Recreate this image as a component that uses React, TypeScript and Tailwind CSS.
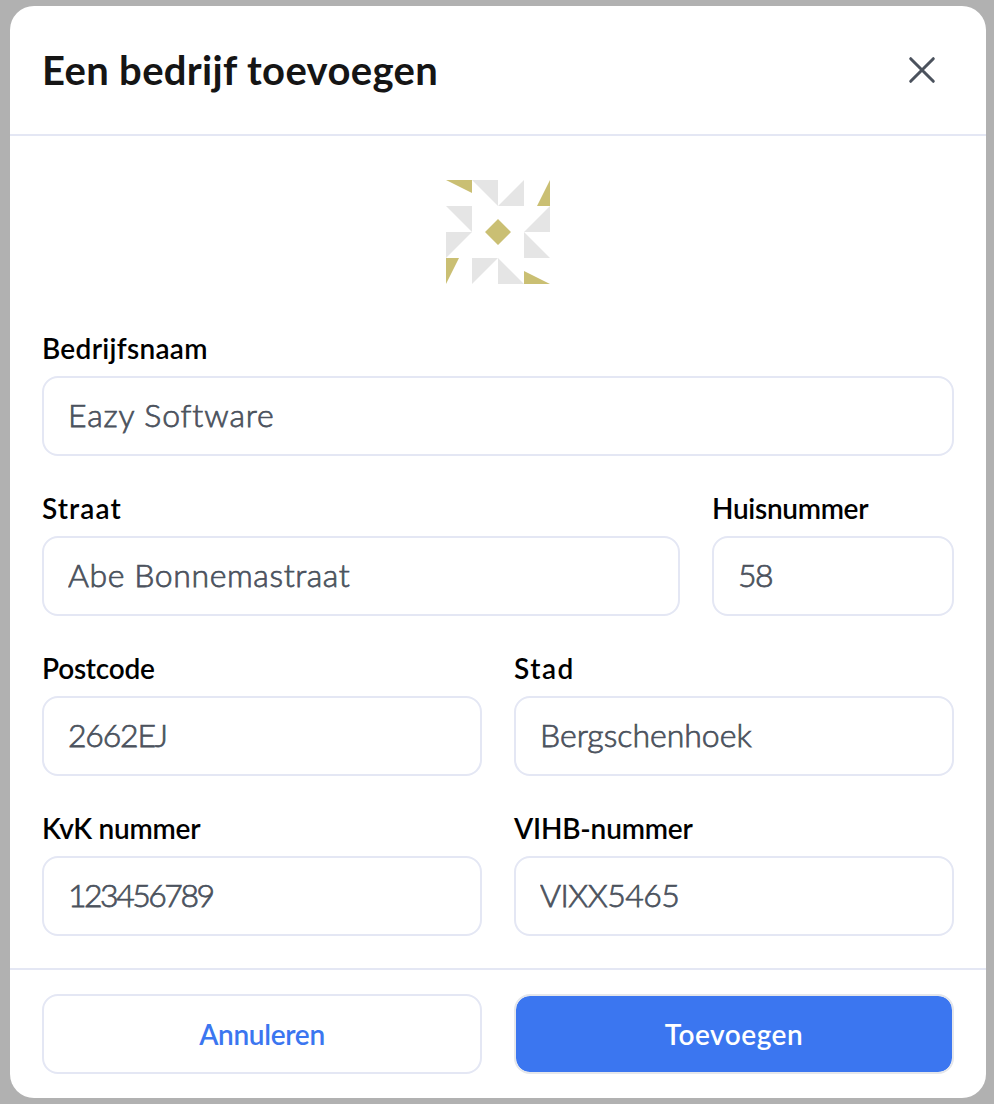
type FieldProps = { label: string; value: string; labelClass?: string; valueClass?: string };

function Field({ label, value, labelClass = "", valueClass = "" }: FieldProps) {
  return (
    <label className="flex min-w-0 flex-col gap-2">
      <span className="h-10 whitespace-nowrap text-[28px] leading-10 font-semibold text-black">
        <span className={labelClass}>{label}</span>
      </span>
      <input
        type="text"
        defaultValue={value}
        className={`h-20 w-full rounded-2xl border-2 border-[#e4e7f4] bg-white px-6 pb-[3px] text-[32px] font-light text-[#4b525d] outline-none [-webkit-text-stroke:0.75px_#4b525d] [font-variant-ligatures:none] ${valueClass}`}
      />
    </label>
  );
}

function CompanyMark() {
  return (
    <svg width="104" height="104" viewBox="0 0 104 104" aria-hidden="true">
      <path
        fill="#e5e5e5"
        d="M26 0H52V26ZM78 0V26H52ZM0 26H26V52ZM0 52H26L0 78ZM104 26V52H78ZM78 52L104 78H78ZM26 78H52L26 104ZM52 78L78 104H52Z"
      />
      <path
        fill="#cabf73"
        d="M0 0H26V13ZM104 0V26H91ZM0 78H13L0 104ZM78 91L104 104H78ZM52 39L65 52L52 65L39 52Z"
      />
    </svg>
  );
}

export default function App() {
  return (
    <div className="h-[1104px] w-full bg-[#b1b1b1] pt-1.5 pr-2 pb-1.5 pl-2.5 font-['Lato',sans-serif]">
      <div className="flex h-full flex-col overflow-hidden rounded-3xl bg-white">
        <header className="flex h-[130px] shrink-0 items-center justify-between border-b-2 border-[#e4e7f4] pr-12 pl-8">
          <h1 className="text-[40px] leading-none font-bold tracking-[0.33px] text-[#151515]">Een bedrijf toevoegen</h1>
          <button type="button" aria-label="Sluiten" className="flex size-8 items-center justify-center">
            <svg width="32" height="32" viewBox="0 0 32 32" fill="none" stroke="#4b525d" strokeWidth="3" strokeLinecap="round">
              <path d="M4.7 4.7L27.3 27.3M27.3 4.7L4.7 27.3" />
            </svg>
          </button>
        </header>

        <main className="flex flex-1 flex-col px-8 pt-11">
          <div className="flex justify-center pb-11">
            <CompanyMark />
          </div>
          <div className="flex flex-col gap-8">
            <Field label="Bedrijfsnaam" value="Eazy Software" labelClass="tracking-[0.3px]" valueClass="tracking-[0.88px]" />
            <div className="grid grid-cols-[638px_1fr] gap-8">
              <Field label="Straat" value="Abe Bonnemastraat" labelClass="tracking-[1.1px]" valueClass="tracking-[0.6px]" />
              <Field label="Huisnummer" value="58" labelClass="tracking-[-0.3px]" valueClass="tracking-[-1.5px]" />
            </div>
            <div className="grid grid-cols-2 gap-8">
              <Field label="Postcode" value="2662EJ" labelClass="tracking-[-0.25px]" valueClass="tracking-[-1.2px]" />
              <Field label="Stad" value="Bergschenhoek" labelClass="tracking-[1.5px]" />
            </div>
            <div className="grid grid-cols-2 gap-8">
              <Field label="KvK nummer" value="123456789" labelClass="tracking-[-0.25px]" valueClass="tracking-[-2.5px]" />
              <Field label="VIHB-nummer" value="VIXX5465" labelClass="tracking-[-0.18px]" valueClass="tracking-[-0.5px]" />
            </div>
          </div>
        </main>

        <footer className="grid h-[130px] shrink-0 grid-cols-2 gap-8 border-t-2 border-[#e4e7f4] px-8 py-6">
          <button type="button" className="h-20 rounded-2xl border-2 border-[#e4e7f4] bg-white text-[28px] font-semibold tracking-[-0.3px] text-[#3b76f0]">
            Annuleren
          </button>
          <button type="button" className="h-20 rounded-2xl border-2 border-[#e5e7eb] bg-[#3b76f0] bg-clip-padding text-[28px] font-semibold tracking-[0.5px] text-white">
            Toevoegen
          </button>
        </footer>
      </div>
    </div>
  );
}
